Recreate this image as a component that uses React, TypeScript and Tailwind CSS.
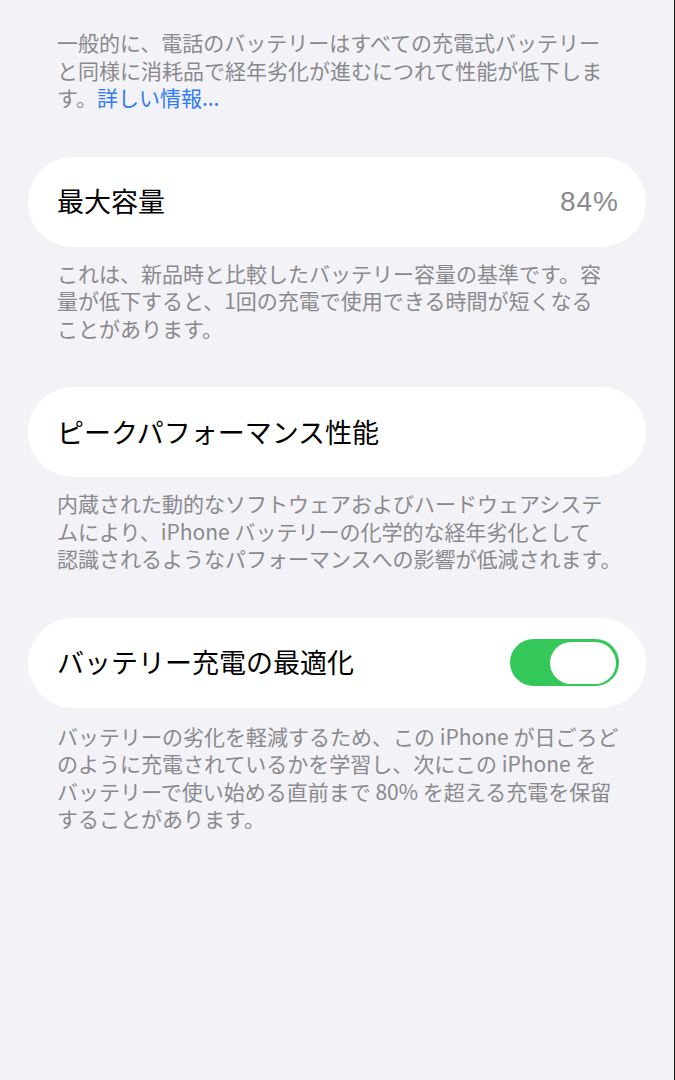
import { useState } from 'react'

const font = { fontFamily: '"Noto Sans CJK JP", "Noto Sans", sans-serif' }

// each footnote is given as its lines, the way Settings breaks them
function Footnote({ lines, link }: { lines: string[]; link?: string }) {
  return (
    <p className="px-[29px] text-[21px] leading-[27.5px] text-[#8a8a8e]">
      {lines.map((line, i) => (
        <span key={i} className="block whitespace-nowrap">
          {line}
          {link && i === lines.length - 1 && <span className="text-[#2f7bf5]">{link}</span>}
        </span>
      ))}
    </p>
  )
}

function Row({ children }: { children: React.ReactNode }) {
  return (
    <div className="flex h-[90px] items-center justify-between rounded-full bg-white pl-[29px] pr-[27px]">
      {children}
    </div>
  )
}

function Toggle({ on, onChange }: { on: boolean; onChange: (v: boolean) => void }) {
  return (
    <button
      onClick={() => onChange(!on)}
      className={`flex h-[47px] w-[109px] items-center rounded-full p-[3px] ${
        on ? 'justify-end bg-[#34c759]' : 'justify-start bg-[#e9e9eb]'
      }`}
    >
      <span className="h-[42px] w-[66px] rounded-full bg-white" />
    </button>
  )
}

export default function App() {
  const [optimized, setOptimized] = useState(true)

  return (
    <main
      className="h-[1080px] w-full overflow-hidden border-r border-[#1c1c1e] bg-[#f2f2f7] px-[28px] pt-[29px]"
      style={font}
    >
      <Footnote
        lines={[
          '一般的に、電話のバッテリーはすべての充電式バッテリー',
          'と同様に消耗品で経年劣化が進むにつれて性能が低下しま',
          'す。',
        ]}
        link="詳しい情報..."
      />

      <section className="mt-[45px]">
        <Row>
          <span className="text-[27px] text-black">最大容量</span>
          <span
            className="text-[28px] tracking-[1px] text-[#8a8a8e]"
            style={{ fontFamily: '"Liberation Sans", sans-serif' }}
          >
            84%
          </span>
        </Row>
        <div className="mt-[13px]">
          <Footnote
            lines={[
              'これは、新品時と比較したバッテリー容量の基準です。容',
              '量が低下すると、1回の充電で使用できる時間が短くなる',
              'ことがあります。',
            ]}
          />
        </div>
      </section>

      <section className="mt-[45px]">
        <Row>
          <span className="text-[27px] text-black">ピークパフォーマンス性能</span>
        </Row>
        <div className="mt-[13px]">
          <Footnote
            lines={[
              '内蔵された動的なソフトウェアおよびハードウェアシステ',
              'ムにより、iPhone バッテリーの化学的な経年劣化として',
              '認識されるようなパフォーマンスへの影響が低減されます。',
            ]}
          />
        </div>
      </section>

      <section className="mt-[45px]">
        <Row>
          <span className="text-[27px] text-black">バッテリー充電の最適化</span>
          <Toggle on={optimized} onChange={setOptimized} />
        </Row>
        <div className="mt-[15px]">
          <Footnote
            lines={[
              'バッテリーの劣化を軽減するため、この iPhone が日ごろど',
              'のように充電されているかを学習し、次にこの iPhone を',
              'バッテリーで使い始める直前まで 80% を超える充電を保留',
              'することがあります。',
            ]}
          />
        </div>
      </section>
    </main>
  )
}
